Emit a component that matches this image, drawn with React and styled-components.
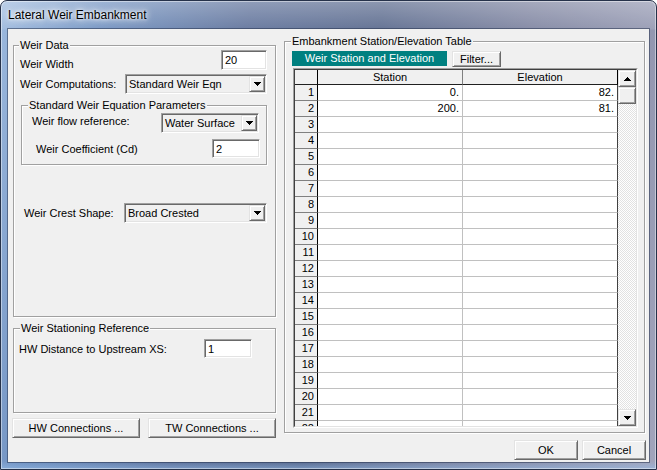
import React from 'react';
import styled, { createGlobalStyle } from 'styled-components';

const Global = createGlobalStyle`
  html, body { margin: 0; padding: 0; background: #ffffff; }
  body { font-family: "Liberation Sans", Arial, sans-serif; font-size: 11px; color: #000; }
  * { box-sizing: border-box; }
`;

const Window = styled.div`
  width: 657px;
  height: 470px;
  display: flex;
  flex-direction: column;
  border: 1px solid #26324a;
  border-radius: 7px 7px 0 0;
  padding: 0 7px 7px 7px;
  background:
    linear-gradient(to bottom, rgba(255,255,255,0.32) 0, rgba(255,255,255,0.1) 28px, rgba(255,255,255,0) 29px),
    linear-gradient(to top, rgba(150,190,235,0.55) 0, rgba(150,190,235,0) 8px),
    linear-gradient(100deg, #9cb9de 0%, #6f90c0 14%, #5c6f98 34%, #56668a 52%, #7b819e 72%, #a2a5bc 100%);
  box-shadow: inset 0 0 0 1px rgba(255,255,255,0.45);
`;

const TitleBar = styled.div`
  height: 28px;
  display: flex;
  align-items: center;
`;

const TitleText = styled.span`
  font-family: "Liberation Sans", Arial, sans-serif;
  font-size: 12px;
  color: #000;
  text-shadow: 0 0 10px rgba(255,255,255,0.95), 0 0 6px rgba(255,255,255,0.9), 0 0 3px #fff;
`;

const Client = styled.div`
  flex: 1;
  background: #f0f0f0;
  display: flex;
  align-items: flex-start;
  box-shadow: 0 0 0 1px rgba(40, 52, 80, 0.55);
`;

const LeftColumn = styled.div`
  width: 265px;
  margin-left: 4px;
  padding-top: 16px;
  display: flex;
  flex-direction: column;
`;

const RightColumn = styled.div`
  width: 362px;
  margin-left: 7px;
  padding-top: 12px;
  display: flex;
  flex-direction: column;
`;

const Group = styled.div`
  position: relative;
  width: ${p => p.$w}px;
  height: ${p => p.$h}px;
  margin-top: ${p => p.$mt || 0}px;
  margin-left: ${p => p.$ml || 0}px;
  padding: ${p => p.$pt || 0}px 0 0 ${p => p.$pl || 0}px;
  border: 1px solid #a0a0a0;
  box-shadow: inset 1px 1px 0 #fff, 1px 1px 0 #fff;
  display: flex;
  flex-direction: column;
  align-items: stretch;
  flex-shrink: 0;
`;

const Legend = styled.span`
  position: absolute;
  top: -7px;
  left: ${p => p.$x}px;
  padding: 0 1px;
  line-height: 13px;
  background: #f0f0f0;
  white-space: nowrap;
`;

const Row = styled.div`
  display: flex;
  align-items: flex-start;
  margin-top: ${p => p.$mt || 0}px;
  padding-left: ${p => p.$pl || 0}px;
  padding-right: ${p => p.$pr || 0}px;
`;

const Label = styled.span`
  margin-top: ${p => p.$mt || 0}px;
  line-height: 13px;
  white-space: nowrap;
`;

const TextBox = styled.input`
  width: ${p => p.$w}px;
  height: ${p => p.$h || 20}px;
  margin-left: auto;
  padding: 0 0 0 3px;
  font: inherit;
  color: #000;
  background: #fff;
  border: 1px solid;
  border-color: #a0a0a0 #fff #fff #a0a0a0;
  box-shadow: inset 1px 1px 0 #696969, inset -1px -1px 0 #e3e3e3;
  outline: none;
`;

const Select = styled.div`
  width: ${p => p.$w}px;
  height: 20px;
  margin-left: auto;
  padding: 1px;
  display: flex;
  align-items: center;
  background: #f0f0f0;
  border: 1px solid;
  border-color: #a0a0a0 #fff #fff #a0a0a0;
  box-shadow: inset 1px 1px 0 #696969, inset -1px -1px 0 #e3e3e3;
`;

const SelectText = styled.span`
  flex: 1;
  padding-left: 2px;
  line-height: 16px;
  white-space: nowrap;
  overflow: hidden;
`;

const RaisedBox = styled.div`
  display: flex;
  align-items: center;
  justify-content: center;
  background: #f0f0f0;
  border: 1px solid;
  border-color: #e3e3e3 #696969 #696969 #e3e3e3;
  box-shadow: inset 1px 1px 0 #fff, inset -1px -1px 0 #a0a0a0;
`;

const DropButton = styled(RaisedBox)`
  width: 16px;
  height: 16px;
`;

const Button = styled(RaisedBox)`
  width: ${p => p.$w}px;
  height: ${p => p.$h || 20}px;
  white-space: nowrap;
  line-height: 13px;
`;

const ButtonRow = styled.div`
  display: flex;
  gap: ${p => p.$gap}px;
  margin-top: ${p => p.$mt}px;
  justify-content: ${p => p.$justify || 'flex-start'};
`;

const TabRow = styled.div`
  display: flex;
  align-items: flex-start;
  gap: 5px;
`;

const Tab = styled.div`
  width: 155px;
  height: 15px;
  background: #008080;
  color: #ffffff;
  text-align: center;
  line-height: 15px;
  white-space: nowrap;
`;

const GridFrame = styled.div`
  width: 345px;
  height: 360px;
  margin-top: 1px;
  margin-left: 1px;
  border: 1px solid;
  border-color: #a0a0a0 #fff #fff #a0a0a0;
`;

const GridInner = styled.div`
  height: 100%;
  display: flex;
  border: 1px solid;
  border-color: #404040 #e3e3e3 #e3e3e3 #404040;
  background: #fff;
  overflow: hidden;
`;

const Table = styled.div`
  flex: 1;
  display: grid;
  grid-template-columns: 23px 145px 1fr;
  grid-template-rows: 15px;
  grid-auto-rows: 16px;
  align-content: start;
  overflow: hidden;
`;

const HeadCell = styled.div`
  background: #f0f0f0;
  border-bottom: 1px solid #202020;
  border-right: 1px solid ${p => p.$dark ? '#000' : '#808080'};
  text-align: center;
  line-height: 14px;
  white-space: nowrap;
`;

const RowHead = styled.div`
  background: #f0f0f0;
  border-bottom: 1px solid #808080;
  border-right: 1px solid #000;
  text-align: right;
  padding-right: 3px;
  line-height: 15px;
`;

const DataCell = styled.div`
  background: #fff;
  border-bottom: 1px solid #c0c0c0;
  border-right: 1px solid ${p => p.$last ? '#404040' : '#c0c0c0'};
  text-align: right;
  padding-right: 3px;
  line-height: 15px;
  white-space: nowrap;
`;

const ScrollBar = styled.div`
  width: 18px;
  display: flex;
  flex-direction: column;
  background: repeating-conic-gradient(#ffffff 0 25%, #e2e2e2 0 50%) 0 0 / 2px 2px;
`;

const ScrollButton = styled(RaisedBox)`
  height: 17px;
  flex-shrink: 0;
`;

const Track = styled.div`
  flex: 1;
`;

const Arrow = ({ down }) => (
  <svg width="7" height="4" viewBox="0 0 7 4" shapeRendering="crispEdges">
    <polygon points={down ? '0,0 7,0 3.5,4' : '0,4 7,4 3.5,0'} fill="#000" />
  </svg>
);

const ComboBox = ({ w, value }) => (
  <Select $w={w}>
    <SelectText>{value}</SelectText>
    <DropButton><Arrow down /></DropButton>
  </Select>
);

const data = Array.from({ length: 22 }, (_, i) => ({
  n: i + 1,
  s: i === 0 ? '0.' : i === 1 ? '200.' : '',
  e: i === 0 ? '82.' : i === 1 ? '81.' : '',
}));

export default function App() {
  return (
    <>
      <Global />
      <Window>
        <TitleBar>
          <TitleText>Lateral Weir Embankment</TitleText>
        </TitleBar>
        <Client>
          <LeftColumn>
            <Group $w={263} $h={272} $ml={1} $pt={4}>
              <Legend $x={5}>Weir Data</Legend>
              <Row $pl={6} $pr={8}>
                <Label $mt={8}>Weir Width</Label>
                <TextBox $w={46} $h={20} defaultValue="20" readOnly />
              </Row>
              <Row $mt={3} $pl={6} $pr={8}>
                <Label $mt={4}>Weir Computations:</Label>
                <ComboBox w={142} value="Standard Weir Eqn" />
              </Row>
              <Group $w={246} $h={60} $mt={11} $ml={7} $pt={7}>
                <Legend $x={6}>Standard Weir Equation Parameters</Legend>
                <Row $pl={10} $pr={7}>
                  <Label $mt={2}>Weir flow reference:</Label>
                  <ComboBox w={98} value="Water Surface" />
                </Row>
                <Row $mt={6} $pl={14} $pr={6}>
                  <Label $mt={4}>Weir Coefficient (Cd)</Label>
                  <TextBox $w={48} $h={19} defaultValue="2" readOnly />
                </Row>
              </Group>
              <Row $mt={38} $pl={10} $pr={8}>
                <Label $mt={4}>Weir Crest Shape:</Label>
                <ComboBox w={143} value="Broad Crested" />
              </Row>
            </Group>
            <Group $w={263} $h={85} $mt={11} $ml={1} $pt={10}>
              <Legend $x={6}>Weir Stationing Reference</Legend>
              <Row $pl={5} $pr={23}>
                <Label $mt={4}>HW Distance to Upstream XS:</Label>
                <TextBox $w={48} $h={19} defaultValue="1" readOnly />
              </Row>
            </Group>
            <ButtonRow $gap={8} $mt={5}>
              <Button $w={128}>HW Connections ...</Button>
              <Button $w={128}>TW Connections ...</Button>
            </ButtonRow>
          </LeftColumn>
          <RightColumn>
            <Group $w={361} $h={392} $pt={9} $pl={7}>
              <Legend $x={6}>Embankment Station/Elevation Table</Legend>
              <TabRow>
                <Tab>Weir Station and Elevation</Tab>
                <Button $w={49} $h={16}>Filter...</Button>
              </TabRow>
              <GridFrame>
                <GridInner>
                  <Table>
                    <HeadCell $dark />
                    <HeadCell>Station</HeadCell>
                    <HeadCell $dark>Elevation</HeadCell>
                    {data.map(r => (
                      <React.Fragment key={r.n}>
                        <RowHead>{r.n}</RowHead>
                        <DataCell>{r.s}</DataCell>
                        <DataCell $last>{r.e}</DataCell>
                      </React.Fragment>
                    ))}
                  </Table>
                  <ScrollBar>
                    <ScrollButton><Arrow /></ScrollButton>
                    <ScrollButton />
                    <Track />
                    <ScrollButton><Arrow down /></ScrollButton>
                  </ScrollBar>
                </GridInner>
              </GridFrame>
            </Group>
            <ButtonRow $gap={4} $mt={7} $justify="flex-end">
              <Button $w={64}>OK</Button>
              <Button $w={64}>Cancel</Button>
            </ButtonRow>
          </RightColumn>
        </Client>
      </Window>
    </>
  );
}
